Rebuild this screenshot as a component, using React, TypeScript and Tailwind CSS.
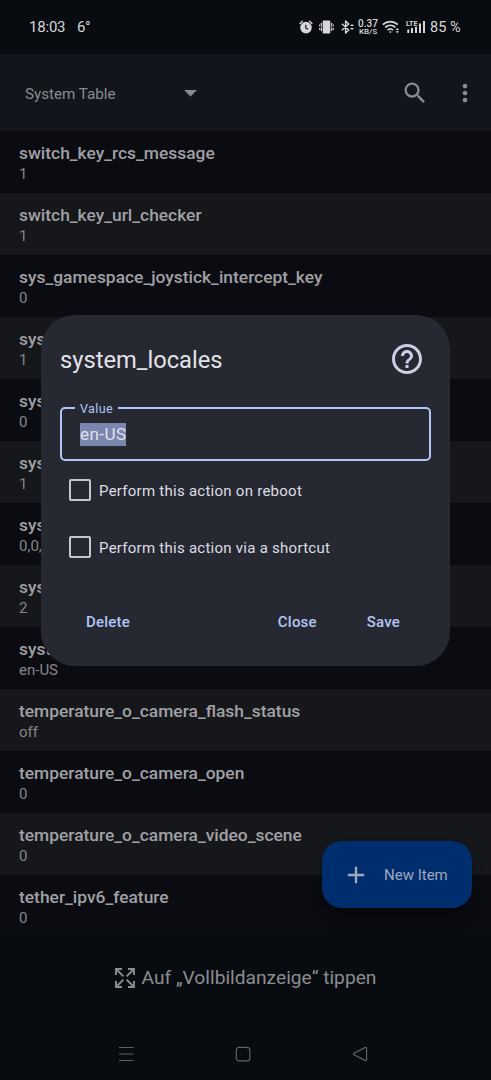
import React from 'react';
import { MdSearch, MdMoreVert, MdArrowDropDown, MdHelpOutline, MdAdd } from 'react-icons/md';

interface SettingItem {
  name: string;
  value: string;
}

const settings: SettingItem[] = [
  { name: 'switch_key_rcs_message', value: '1' },
  { name: 'switch_key_url_checker', value: '1' },
  { name: 'sys_gamespace_joystick_intercept_key', value: '0' },
  { name: 'sys_', value: '1' },
  { name: 'sys_', value: '0' },
  { name: 'sys_', value: '1' },
  { name: 'sys_', value: '0,0,' },
  { name: 'sys_', value: '2' },
  { name: 'system_locales', value: 'en-US' },
  { name: 'temperature_o_camera_flash_status', value: 'off' },
  { name: 'temperature_o_camera_open', value: '0' },
  { name: 'temperature_o_camera_video_scene', value: '0' },
  { name: 'tether_ipv6_feature', value: '0' },
];

const AlarmIcon = () => (
  <svg className="w-[14px] h-[14px]" viewBox="0 0 14 14" fill="none">
    <circle cx="7" cy="7.6" r="5.8" fill="#d6d6d8" />
    <path d="M1 3.4 3.4 1.2M13 3.4 10.6 1.2" stroke="#d6d6d8" strokeWidth="1.4" strokeLinecap="round" />
    <path d="M6.8 4.8v3.2l2.2 1.2" stroke="#080b10" strokeWidth="1.1" />
  </svg>
);

const VibrateIcon = () => (
  <svg className="w-[15px] h-[14px]" viewBox="0 0 15 14" fill="none">
    <rect x="3.7" y="0.4" width="7.6" height="13.2" rx="1" fill="#d6d6d8" />
    <path d="M2.3 3v8M12.7 3v8" stroke="#d6d6d8" strokeWidth="1.2" strokeDasharray="3.4 1.2" />
    <path d="M.6 4.5v2M.6 8v2M14.4 4.5v2M14.4 8v2" stroke="#d6d6d8" strokeWidth="1" />
  </svg>
);

const BluetoothIcon = () => (
  <svg className="w-[13px] h-[14px]" viewBox="0 0 13 14" fill="none">
    <path d="M.8 3.8 7.8 10 4.6 13V1l3.2 3L.8 10.2" stroke="#d6d6d8" strokeWidth="1.4" strokeLinejoin="round" />
    <path d="M9 6 11 3.9 13 6zM9 8l2 2.1L13 8z" fill="#d6d6d8" />
  </svg>
);

const WifiIcon = () => (
  <svg className="w-[18px] h-[14px]" viewBox="0 0 18 14" fill="none">
    <path d="M.8 4.6c4.4-4 10.6-4 15 0M3.2 7.4c3-2.7 7.2-2.7 10.2 0" stroke="#d6d6d8" strokeWidth="1.8" />
    <path d="M5.6 10.1c1.6-1.5 3.8-1.5 5.4 0" stroke="#d6d6d8" strokeWidth="1.7" />
    <path d="M6.8 11.5h3L8.3 13.2z" fill="#d6d6d8" />
    <path d="M13.5 10 15.3 8l1.8 2zM13.5 11.2l1.8 2 1.8-2z" fill="#d6d6d8" />
  </svg>
);

const SignalIcon = () => (
  <svg className="w-[20px] h-[14px]" viewBox="0 0 20 14" fill="none">
    <text x="0" y="5.8" fill="#d6d6d8" fontSize="7.4" fontWeight="700" textLength="11.5" lengthAdjust="spacingAndGlyphs">
      LTE
    </text>
    <path d="M2.3 9.5V13M6 8v5M10 6.8V13" stroke="#d6d6d8" strokeWidth="2" />
    <path d="M14 3.5V13M18 1v12" stroke="#d6d6d8" strokeWidth="2" />
  </svg>
);

const StatusBar = () => (
  <div className="flex h-[54px] items-center pl-[29px] text-[15px] text-[#d6d6d8]">
    <span className="mt-px w-12 tracking-[-0.2px]">18:03</span>
    <span className="mt-px tracking-[-0.5px]">6°</span>
    <div className="ml-auto mr-[30px] flex items-center">
      <AlarmIcon />
      <span className="ml-[6px] flex"><VibrateIcon /></span>
      <span className="ml-[7px] flex"><BluetoothIcon /></span>
      <div className="ml-1 flex w-5 flex-col items-center leading-none">
        <span className="text-[10px] font-medium leading-[9px]">0.37</span>
        <span className="text-[8px] font-medium leading-[8px]">KB/S</span>
      </div>
      <span className="ml-1 flex"><WifiIcon /></span>
      <span className="ml-[6px] flex"><SignalIcon /></span>
      <span className="ml-1 mt-[2px] w-[31px] whitespace-nowrap text-[14.5px]">85 %</span>
    </div>
  </div>
);

const Toolbar = () => (
  <div className="flex h-[77px] items-center bg-[#12151c] pl-[25px] text-[#8a8b91]">
    <span className="mt-[3px] w-[150px] text-[15.2px]">System Table</span>
    <MdArrowDropDown className="h-[31px] w-[31px]" />
    <MdSearch className="ml-auto h-7 w-7" />
    <MdMoreVert className="ml-[22px] mr-3 h-7 w-7" />
  </div>
);

const SettingsList: React.FC<{ items: SettingItem[] }> = ({ items }) => (
  <div className="h-[799px] overflow-hidden bg-[#0b0c12]">
    {items.map((item, index) => (
      <div
        key={index}
        className="h-[62px] pl-[19px] pt-[11px] odd:bg-[#0b0c12] even:bg-[#16171b]"
      >
        <p className="text-[17.4px] font-medium leading-[22px] text-[#a1a1a5]">{item.name}</p>
        <p className="text-[15px] leading-[21px] text-[#85868a]">{item.value}</p>
      </div>
    ))}
  </div>
);

const ActionCheckbox: React.FC<{ label: string }> = ({ label }) => (
  <label className="flex h-[57px] items-center">
    <span className="h-[22px] w-[22px] rounded-[2px] border-2 border-[#c6c5d2]" />
    <span className="ml-2 mt-[3px] text-[15px] tracking-[0.26px] text-[#dddde4]">{label}</span>
  </label>
);

const EditDialog = () => (
  <div className="absolute left-[41px] top-[315px] h-[351px] w-[409px] rounded-[34px] bg-[#272932] px-[19px]">
    <div className="flex h-[87px] items-center justify-between">
      <h2 className="mt-1 text-[23.7px] text-[#e2e2e9]">system_locales</h2>
      <MdHelpOutline className="mr-[6px] h-9 w-9 text-[#d0cde6]" />
    </div>
    <div className="relative mt-[5px] flex h-[54px] items-center rounded-[5px] border-[2.5px] border-[#b4c5f7] pl-[18px]">
      <span className="absolute -top-[8px] left-[13px] bg-[#272932] px-[5px] text-[12.5px] leading-4 tracking-[0.4px] text-[#b4c5f7]">
        Value
      </span>
      <span className="bg-[#7986ae] text-[17px] leading-[23px] tracking-[0.45px] text-[#e2e2e9]">en-US</span>
    </div>
    <div className="ml-[9px]">
      <ActionCheckbox label="Perform this action on reboot" />
      <ActionCheckbox label="Perform this action via a shortcut" />
    </div>
    <div className="mt-[34px] flex pl-[26px] text-[15px] font-medium leading-[26px] text-[#b4c5f7]">
      <button className="tracking-[0.2px]">Delete</button>
      <button className="ml-auto tracking-[0.2px]">Close</button>
      <button className="ml-[50px] mr-[31px] tracking-[0.2px]">Save</button>
    </div>
  </div>
);

const FullscreenHint = () => (
  <div className="flex h-[96px] items-center justify-center text-[#8b8d90]">
    <svg className="h-5 w-5" viewBox="0 0 20 20" fill="none" stroke="currentColor" strokeWidth="1.9">
      <path d="M1 7V1h6M13 1h6v6M19 13v6h-6M7 19H1v-6" />
      <path d="m1 1 7.4 7.4M19 1l-7.4 7.4M19 19l-7.4-7.4M1 19l7.4-7.4" />
    </svg>
    <span className="ml-[7px] text-[19.2px]">Auf „Vollbildanzeige“ tippen</span>
  </div>
);

const NavBar = () => (
  <div className="flex h-[56px] items-center justify-between pl-[118px] pr-[123px] text-[#5f6165]">
    <svg className="h-4 w-4" viewBox="0 0 16 16" fill="none" stroke="currentColor" strokeWidth="1.2">
      <path d="M1 1.5h14.5M1 8h14.5M1 14.5h14.5" />
    </svg>
    <svg className="h-4 w-4" viewBox="0 0 16 16" fill="none" stroke="currentColor" strokeWidth="1.2">
      <rect x="1.3" y="1.3" width="13.6" height="13.6" rx="3" />
    </svg>
    <svg className="h-4 w-4" viewBox="0 0 16 16" fill="none" stroke="currentColor" strokeWidth="1.2">
      <path d="M2 7.2 13 1.6q1.6-.6 1.6 1v10.8q0 1.6-1.6 1L2 8.8q-1-.8 0-1.6z" />
    </svg>
  </div>
);

const App: React.FC = () => {
  return (
    <div className="relative h-[1080px] w-[491px] overflow-hidden bg-[#080b10] font-['Roboto',sans-serif]">
      <StatusBar />
      <Toolbar />
      <SettingsList items={settings} />
      <FullscreenHint />
      <NavBar />
      <button className="absolute left-[322px] top-[841px] flex h-[67px] w-[150px] items-center rounded-[20px] bg-[#002d6d] pl-[20px] text-[#9ea8bf] shadow-lg shadow-black/40">
        <MdAdd className="h-[28px] w-[28px]" />
        <span className="ml-[14px] mt-[2px] whitespace-nowrap text-[15px]">New Item</span>
      </button>
      <EditDialog />
    </div>
  );
};

export default App;
